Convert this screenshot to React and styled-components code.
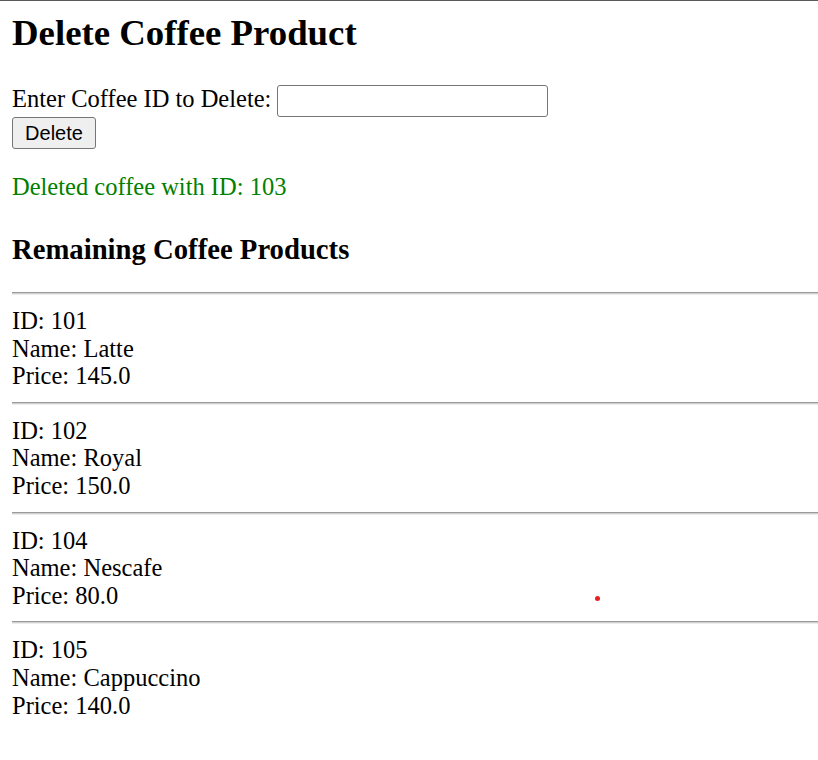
import React from "react";
import styled, { createGlobalStyle } from "styled-components";

const GlobalStyle = createGlobalStyle`
  html {
    border-top: 1px solid #5a5a5a;
  }

  body {
    margin: 0;
    background: #ffffff;
    color: #000000;
    font-family: "Liberation Serif", "Times New Roman", serif;
    font-size: 24.5px;
    line-height: 27.6px;
  }
`;

const Page = styled.main`
  position: relative;
  padding: 11px 0 40px 12px;
  min-height: 700px;
`;

const Title = styled.h1`
  margin: 0 0 31px;
  font-size: 36.8px;
  font-weight: 700;
  line-height: 42px;
`;

const Field = styled.div`
  display: flex;
  align-items: flex-start;
  gap: 6px;
`;

const Label = styled.label``;

const Input = styled.input`
  box-sizing: border-box;
  width: 271px;
  height: 32px;
  margin: 0;
  padding: 2px 4px;
  border: 1px solid #767676;
  border-radius: 3px;
  font-family: "Liberation Sans", Arial, sans-serif;
  font-size: 20px;
  outline: none;
`;

const Button = styled.button`
  display: block;
  box-sizing: border-box;
  width: 84px;
  height: 32px;
  margin: 0;
  padding: 0;
  background: #efefef;
  border: 1px solid #767676;
  border-radius: 3px;
  font-family: "Liberation Sans", Arial, sans-serif;
  font-size: 20px;
  color: #000000;
`;

const Message = styled.p`
  margin: 24px 0 0;
  color: #008000;
`;

const SubTitle = styled.h3`
  margin: 32px 0 27px;
  font-size: 28.7px;
  font-weight: 700;
  line-height: 32.4px;
`;

const Divider = styled.hr`
  box-sizing: content-box;
  height: 1px;
  margin: 12px 0;
  border: none;
  border-top: 1px solid #9a9a9a;
  border-bottom: 1px solid #ececec;
  background: #d0d0d0;
`;

const Product = styled.div``;

const Dot = styled.span`
  position: absolute;
  left: 595px;
  top: 595px;
  width: 5px;
  height: 5px;
  border-radius: 50%;
  background: #e82020;
`;

const products = [
  { id: 101, name: "Latte", price: "145.0" },
  { id: 102, name: "Royal", price: "150.0" },
  { id: 104, name: "Nescafe", price: "80.0" },
  { id: 105, name: "Cappuccino", price: "140.0" },
];

export default function App() {
  return (
    <>
      <GlobalStyle />
      <Page>
        <Title>Delete Coffee Product</Title>
        <Field>
          <Label htmlFor="coffee-id">Enter Coffee ID to Delete:</Label>
          <Input id="coffee-id" type="text" />
        </Field>
        <Button type="button">Delete</Button>
        <Message>Deleted coffee with ID: 103</Message>
        <SubTitle>Remaining Coffee Products</SubTitle>
        {products.map((item) => (
          <React.Fragment key={item.id}>
            <Divider />
            <Product>
              <div>ID: {item.id}</div>
              <div>Name: {item.name}</div>
              <div>Price: {item.price}</div>
            </Product>
          </React.Fragment>
        ))}
        <Dot />
      </Page>
    </>
  );
}
